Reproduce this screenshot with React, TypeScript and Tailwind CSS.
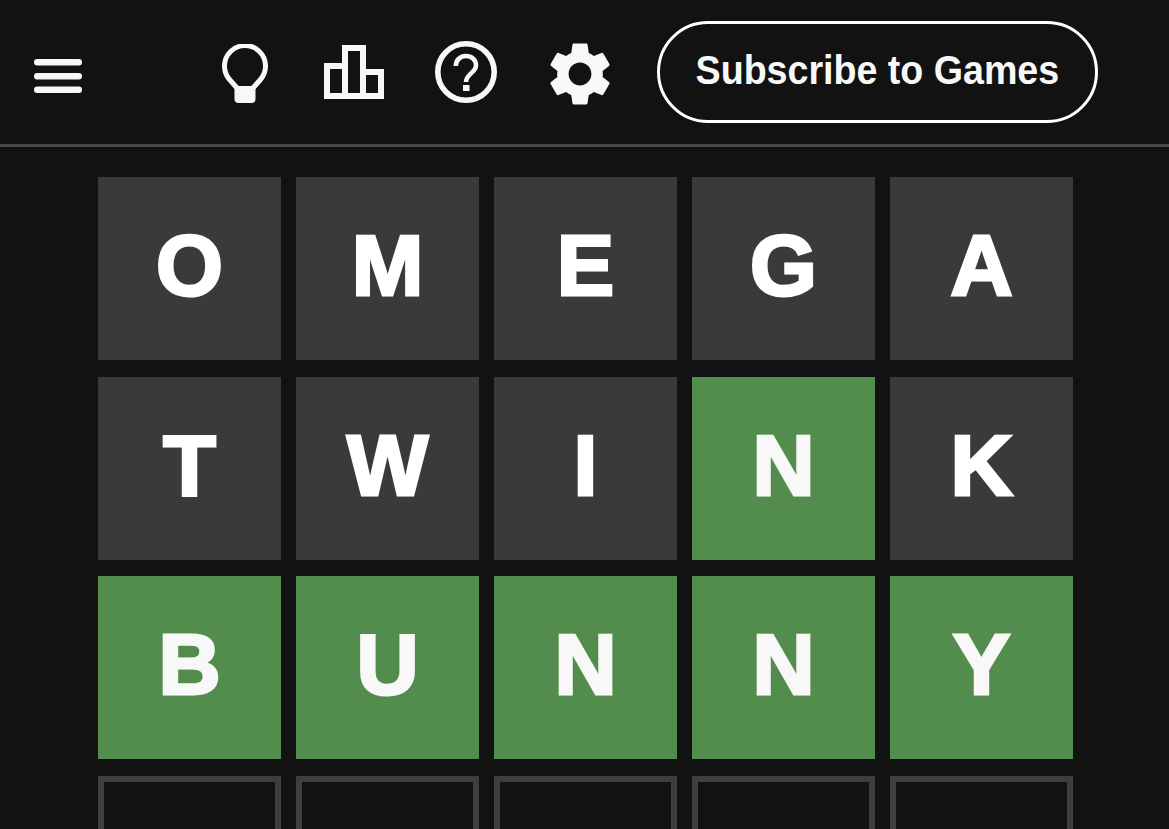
import React from "react";

const ROWS = [
  [["O", "x"], ["M", "x"], ["E", "x"], ["G", "x"], ["A", "x"]],
  [["T", "x"], ["W", "x"], ["I", "x"], ["N", "g"], ["K", "x"]],
  [["B", "g"], ["U", "g"], ["N", "g"], ["N", "g"], ["Y", "g"]],
  [["", "e"], ["", "e"], ["", "e"], ["", "e"], ["", "e"]],
];

function Tile({ letter, state }: { letter: string; state: string }) {
  const color =
    state === "g"
      ? "bg-[#538d4e] text-[#f8f8f8]"
      : state === "x"
        ? "bg-[#3a3a3c] text-white"
        : "border-[6px] border-[#3e3e40]";
  return (
    <div
      className={`flex h-[183px] w-[183px] items-center justify-center pb-[7px] font-['Liberation_Sans',sans-serif] text-[86px] leading-none font-bold [-webkit-text-stroke:3px_currentColor] ${color}`}
    >
      {letter}
    </div>
  );
}

export default function App() {
  return (
    <div className="h-[829px] overflow-hidden bg-[#121213]">
      <header className="flex h-[147px] items-center border-b-[3px] border-[#4a4a4c] pl-[34px]">
        {/* menu */}
        <svg className="mt-[8px] shrink-0" width="48" height="34" viewBox="34 59 48 34" fill="#f8f8f8">
          <rect x="34" y="59" width="48" height="6.5" rx="3.25" />
          <rect x="34" y="73" width="48" height="6.5" rx="3.25" />
          <rect x="34" y="86.5" width="48" height="6.5" rx="3.25" />
        </svg>
        {/* hint bulb */}
        <svg className="mt-[3px] ml-[139px] shrink-0" width="48" height="59" viewBox="220.5 44 48 59">
          <path
            d="M229 79.5A20.5 20.5 0 1 1 260 79.5L252.5 88M229 79.5L236.5 88"
            fill="none"
            stroke="#f8f8f8"
            strokeWidth="5"
          />
          <path d="M234 86H255V99Q255 103 251 103H238Q234 103 234 99Z" fill="#f8f8f8" />
        </svg>
        {/* stats */}
        <svg className="ml-[55px] shrink-0" width="60" height="54" viewBox="324 45 60 54">
          <path
            fillRule="evenodd"
            fill="#f8f8f8"
            d="M324 99V63H342V45H366V69H384V99ZM330 93H342V69H330ZM348 93H360V51H348ZM366 93H378V75H366Z"
          />
        </svg>
        {/* help */}
        <svg className="ml-[51px] shrink-0" width="62" height="62" viewBox="435 41 62 62">
          <circle cx="466" cy="72" r="28.2" fill="none" stroke="#f8f8f8" strokeWidth="5.6" />
          <path
            d="M455.8 66c0-6 4.5-10 10.2-10s10 4 10 9.5c0 7-10 8.5-10 16.5"
            fill="none"
            stroke="#f8f8f8"
            strokeWidth="4.6"
          />
          <rect x="463" y="85" width="6.5" height="6" fill="#f8f8f8" />
        </svg>
        {/* settings */}
        <svg className="mt-[3px] ml-[44.5px] shrink-0" width="76" height="76" viewBox="0 0 24 24" fill="#f8f8f8">
          <path d="M19.14 12.94c.04-.3.06-.61.06-.94 0-.32-.02-.64-.07-.94l2.03-1.58c.18-.14.23-.41.12-.61l-1.92-3.32c-.12-.22-.37-.29-.59-.22l-2.39.96c-.5-.38-1.03-.7-1.62-.94l-.36-2.54c-.04-.24-.24-.41-.48-.41h-3.84c-.24 0-.43.17-.47.41l-.36 2.54c-.59.24-1.13.57-1.62.94l-2.39-.96c-.22-.08-.47 0-.59.22L2.74 8.87c-.12.21-.08.47.12.61l2.03 1.58c-.05.3-.09.63-.09.94s.02.64.07.94l-2.03 1.58c-.18.14-.23.41-.12.61l1.92 3.32c.12.22.37.29.59.22l2.39-.96c.5.38 1.03.7 1.62.94l.36 2.54c.05.24.24.41.48.41h3.84c.24 0 .44-.17.47-.41l.36-2.54c.59-.24 1.13-.56 1.62-.94l2.39.96c.22.08.47 0 .59-.22l1.92-3.32c.12-.22.07-.47-.12-.61l-2.01-1.58zM12 15.6c-1.98 0-3.6-1.62-3.6-3.6s1.62-3.6 3.6-3.6 3.6 1.62 3.6 3.6-1.62 3.6-3.6 3.6z" />
        </svg>
        <button className="ml-[39.5px] flex h-[102px] w-[441px] shrink-0 items-center justify-center rounded-full border-[3px] border-white pb-[4px] font-['Liberation_Sans',sans-serif] text-[40px] font-bold whitespace-nowrap text-[#f8f8f8]">
          <span className="inline-block scale-x-[0.94]">Subscribe to Games</span>
        </button>
      </header>
      <main className="mt-[30px] ml-[98px] grid w-[975px] grid-cols-[repeat(5,183px)] gap-x-[15px] gap-y-[16.5px]">
        {ROWS.flat().map(([letter, state], i) => (
          <Tile key={i} letter={letter} state={state} />
        ))}
      </main>
    </div>
  );
}
